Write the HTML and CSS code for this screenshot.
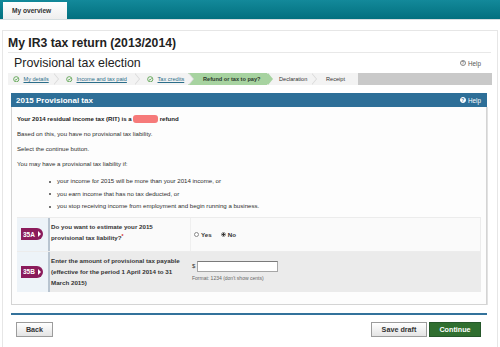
FILE: index.html
```html
<!DOCTYPE html>
<html lang="en">
<head>
<meta charset="utf-8">
<title>My IR3 tax return</title>
<link rel="stylesheet" href="styles.css">
</head>
<body>
<div class="topbar"><div class="tab">My overview</div></div>
<div class="page">
  <h1 class="title">My IR3 tax return (2013/2014)</h1>
  <div class="subhead">
    <h2 class="subtitle">Provisional tax election</h2>
    <a class="help"><span class="help-ico">?</span>Help</a>
  </div>
  <ol class="steps">
    <li class="step s1 done"><svg class="chk" viewBox="0 0 14 14"><circle cx="7" cy="7" r="5.6"/><polyline points="4.3,7.3 6.3,9.2 9.8,5.1"/></svg><a>My details</a></li>
    <li class="step s2 done"><svg class="chk" viewBox="0 0 14 14"><circle cx="7" cy="7" r="5.6"/><polyline points="4.3,7.3 6.3,9.2 9.8,5.1"/></svg><a>Income and tax paid</a></li>
    <li class="step s3 done"><svg class="chk" viewBox="0 0 14 14"><circle cx="7" cy="7" r="5.6"/><polyline points="4.3,7.3 6.3,9.2 9.8,5.1"/></svg><a>Tax credits</a></li>
    <li class="step s4 active">Refund or tax to pay?</li>
    <li class="step s5">Declaration</li>
    <li class="step s6 last">Receipt</li>
  </ol>

  <div class="section">
    <div class="sec-head">
      <span>2015 Provisional tax</span>
      <a class="help help-inv"><span class="help-ico">?</span>Help</a>
    </div>
    <div class="sec-body">
      <p class="strong">Your 2014 residual income tax (RIT) is a<span class="redact"></span>refund</p>
      <p>Based on this, you have no provisional tax liability.</p>
      <p>Select the continue button.</p>
      <p>You may have a provisional tax liability if:</p>
      <ul class="bullets">
        <li>your income for 2015 will be more than your 2014 income, or</li>
        <li>you earn income that has no tax deducted, or</li>
        <li>you stop receiving income from employment and begin running a business.</li>
      </ul>

      <div class="q-row q-light">
        <div class="q-num"><span class="badge">35A</span></div>
        <div class="q-text">Do you want to estimate your 2015<br>provisional tax liability?<sup class="req">*</sup></div>
        <div class="q-ans radios">
          <label class="radio"><input type="radio" name="est">Yes</label>
          <label class="radio"><input type="radio" name="est" checked>No</label>
        </div>
      </div>
      <div class="q-row q-gray">
        <div class="q-num"><span class="badge">35B</span></div>
        <div class="q-text">Enter the amount of provisional tax payable<br>(effective for the period 1 April 2014 to 31<br>March 2015)</div>
        <div class="q-ans amount">
          <div class="amount-line"><span class="dollar">$</span><input class="amt" type="text"></div>
          <div class="hint">Format: 1234 (don't show cents)</div>
        </div>
      </div>
    </div>
  </div>

  <div class="footer">
    <button class="btn back">Back</button>
    <button class="btn save">Save draft</button>
    <button class="btn go">Continue</button>
  </div>
</div>
</body>
</html>
```
FILE: styles.css
```css
* { box-sizing: border-box; }
body {
  margin: 0;
  font-family: "Liberation Sans", Arial, sans-serif;
  color: #333;
  background: #fff;
}
a { color: inherit; text-decoration: none; }

.topbar {
  height: 20px;
  padding: 2px 0 0 3px;
  background: linear-gradient(#13899a, #02707f);
  border-bottom: 1px solid #d5dee0;
}
.tab {
  width: 64px;
  height: 17px;
  padding-left: 9px;
  background: linear-gradient(#ffffff, #eeeeee);
  font-weight: bold;
  font-size: 6.6px;
  line-height: 17px;
  color: #333;
}

.page {
  margin: 10px 2px 0;
  min-height: 330px;
  border: 1px solid #e6e6e6;
  border-bottom: none;
  background: #fff;
}
.title {
  margin: 0 6px 0 5px;
  padding: 5px 0 1px;
  font-size: 12.2px;
  line-height: 15px;
  font-weight: bold;
  color: #222;
  border-bottom: 1px solid #e8e8e8;
}
.subhead {
  display: flex;
  justify-content: space-between;
  align-items: center;
  height: 20px;
  padding: 0 16px 0 11px;
}
.subtitle {
  margin: 0;
  font-size: 12.4px;
  font-weight: normal;
  color: #222;
}
.help {
  display: flex;
  align-items: center;
  gap: 2px;
  font-size: 6.3px;
  color: #555;
}
.help-ico {
  width: 6.5px;
  height: 6.5px;
  border: 0.6px solid #888;
  border-radius: 50%;
  font-size: 4.8px;
  line-height: 5.5px;
  text-align: center;
  color: #555;
  background: #fff;
}
.help-inv { color: #fff; font-weight: normal; }
.help-inv .help-ico {
  background: #fff;
  border-color: #fff;
  color: #2e6f98;
  font-weight: bold;
}

.steps {
  display: flex;
  height: 12px;
  margin: 0 5px;
  padding: 0;
  list-style: none;
  background: #c9c9c9;
}
.step {
  position: relative;
  display: flex;
  align-items: center;
  gap: 4px;
  height: 12px;
  padding-left: 13px;
  background: #f3f3f3;
  font-size: 5.6px;
  color: #333;
  white-space: nowrap;
}
.step::before,
.step::after {
  content: "";
  position: absolute;
  top: 0;
  width: 0;
  height: 0;
  border-top: 6px solid transparent;
  border-bottom: 6px solid transparent;
}
.step::before {
  right: -6px;
  border-left: 5px solid #d9d9d9;
  z-index: 1;
}
.step::after {
  right: -5px;
  border-left: 5px solid #f3f3f3;
  z-index: 2;
}
.step.last::before,
.step.last::after { display: none; }
.s1 { width: 45px; padding-left: 5px; }
.s2 { width: 81px; }
.s3 { width: 54px; }
.s4 { width: 79px; padding-left: 15px; }
.s5 { width: 44px; padding-left: 12px; }
.s6 { width: 47px; padding-left: 15px; }
.step.active {
  background: #a7d3a0;
  font-weight: bold;
  color: #2d3a2c;
}
.step.active::after { border-left-color: #a7d3a0; }
.step.active::before { border-left-color: #a7d3a0; }
.step.done a {
  color: #2b6e8a;
  text-decoration: underline;
}
.chk {
  width: 6.5px;
  height: 6.5px;
  flex: none;
  fill: none;
  stroke: #4a9a3c;
  stroke-width: 1.7;
}

.section { margin: 8px 10px 0 8px; }
.sec-head {
  display: flex;
  justify-content: space-between;
  align-items: center;
  height: 14px;
  padding: 0 6px 0 5px;
  background: #2e6f98;
  color: #fff;
  font-weight: bold;
  font-size: 8px;
}
.sec-body {
  padding: 8px 5px 12px;
  background: #fdfdfd;
  border: 1px solid #d4d4d4;
  border-top: none;
  box-shadow: 1px 0 0 #e2e2e2;
}
.sec-body p {
  margin: 0 0 7px;
  font-size: 6.1px;
  line-height: 8px;
  color: #2e2e2e;
}
.sec-body p.strong { font-weight: bold; color: #222; }
.redact {
  display: inline-block;
  width: 25px;
  height: 8px;
  margin: 0 2px 0 1px;
  vertical-align: middle;
  border-radius: 3px;
  background: #f67a7a;
  filter: blur(0.7px);
}
.bullets {
  margin: 0 0 4px;
  padding: 0 0 0 32px;
  list-style: none;
  font-size: 6.1px;
  line-height: 12.5px;
  color: #2e2e2e;
}
.bullets li {
  display: flex;
  align-items: center;
  gap: 6px;
}
.bullets li::before {
  content: "";
  width: 2px;
  height: 2px;
  border-radius: 50%;
  background: #444;
  flex: none;
}

.q-row { display: flex; }
.q-light {
  height: 35px;
  background: #fafafa;
  border: 1px solid #ececec;
  border-left: none;
}
.q-gray {
  height: 40px;
  background: #ebebeb;
}
.q-num {
  width: 33px;
  flex: none;
  display: flex;
  align-items: center;
  padding-left: 4px;
  background: #edf3f8;
  border-right: 2px solid #b8c4d0;
}
.badge {
  position: relative;
  display: flex;
  align-items: center;
  width: 22px;
  height: 12px;
  padding-left: 2px;
  background: #8b1b5b;
  color: #fff;
  font-weight: bold;
  font-size: 6.5px;
  border-radius: 0 6px 6px 0;
}
.badge::after {
  content: "";
  position: absolute;
  right: 2px;
  top: 3px;
  border-top: 3px solid transparent;
  border-bottom: 3px solid transparent;
  border-left: 3px solid #fff;
}
.q-text {
  width: 140px;
  flex: none;
  padding: 3px 0 0 1px;
  font-weight: bold;
  font-size: 6.2px;
  line-height: 11.5px;
  color: #333;
}
.q-gray .q-text { line-height: 11px; }
.req {
  color: #d21c1c;
  font-size: 5px;
  line-height: 0;
  vertical-align: 2px;
}
.q-ans { flex: 1; }
.radios {
  display: flex;
  align-items: center;
  gap: 9px;
  padding-left: 3px;
  border-left: 1px solid #efefef;
}
.radio {
  display: flex;
  align-items: center;
  gap: 2px;
  font-weight: bold;
  font-size: 6.2px;
  color: #333;
}
.radio input {
  appearance: none;
  -webkit-appearance: none;
  width: 5px;
  height: 5px;
  margin: 0;
  border: 0.7px solid #8a8a8a;
  border-radius: 50%;
  background: #fff;
}
.radio input:checked {
  background: radial-gradient(circle, #333 0 1.1px, #fff 1.4px);
}
.amount { padding: 9px 0 0 2px; }
.amount-line {
  display: flex;
  align-items: center;
  gap: 2px;
}
.dollar { font-size: 6px; color: #333; }
.amt {
  width: 81px;
  height: 11px;
  margin: 0;
  padding: 0;
  border: 1px solid #a6a6a6;
  border-top-color: #7a7a7a;
  background: #fff;
}
.hint {
  margin-top: 3px;
  font-size: 5px;
  line-height: 7px;
  color: #666;
}

.footer {
  display: flex;
  gap: 2px;
  margin: 8px 10px 0 8px;
  padding: 7px 6px 0 5px;
  border-top: 2px solid #33729b;
}
.btn {
  height: 15px;
  padding: 0;
  font-family: "Liberation Sans", Arial, sans-serif;
  font-weight: bold;
  font-size: 7.2px;
  color: #333;
  background: linear-gradient(#ffffff, #e4e4e4);
  border: 1px solid #9c9c9c;
}
.back { width: 37px; }
.save { width: 56px; margin-left: auto; }
.go {
  width: 52px;
  color: #fff;
  background: #306f30;
  border-color: #25572a;
}
```
